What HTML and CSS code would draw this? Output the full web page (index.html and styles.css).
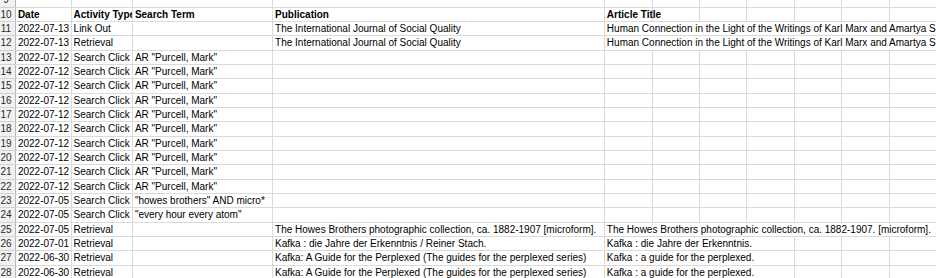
FILE: index.html
```html
<!DOCTYPE html>
<html lang="en">
<head>
<meta charset="utf-8">
<title>Activity log</title>
<link rel="stylesheet" href="styles.css">
</head>
<body>
<table class="sheet">
  <colgroup>
    <col class="c-rh">
    <col class="c-a">
    <col class="c-b">
    <col class="c-c">
    <col class="c-d">
    <col class="c-n"><col class="c-n"><col class="c-n"><col class="c-n"><col class="c-n"><col class="c-n"><col class="c-n">
  </colgroup>
  <tbody>
    <tr><th class="rh">9</th><td></td><td></td><td></td><td></td><td></td><td></td><td></td><td></td><td></td><td></td><td></td></tr>
    <tr class="head"><th class="rh">10</th><td>Date</td><td class="clip">Activity Type</td><td>Search Term</td><td>Publication</td><td>Article Title</td><td></td><td></td><td></td><td></td><td></td><td></td></tr>
    <tr><th class="rh">11</th><td>2022-07-13</td><td>Link Out</td><td></td><td>The International Journal of Social Quality</td><td colspan="7">Human Connection in the Light of the Writings of Karl Marx and Amartya Sen</td></tr>
    <tr><th class="rh">12</th><td>2022-07-13</td><td>Retrieval</td><td></td><td>The International Journal of Social Quality</td><td colspan="7">Human Connection in the Light of the Writings of Karl Marx and Amartya Sen</td></tr>
    <tr><th class="rh">13</th><td>2022-07-12</td><td>Search Click</td><td>AR "Purcell, Mark"</td><td></td><td></td><td></td><td></td><td></td><td></td><td></td><td></td></tr>
    <tr><th class="rh">14</th><td>2022-07-12</td><td>Search Click</td><td>AR "Purcell, Mark"</td><td></td><td></td><td></td><td></td><td></td><td></td><td></td><td></td></tr>
    <tr><th class="rh">15</th><td>2022-07-12</td><td>Search Click</td><td>AR "Purcell, Mark"</td><td></td><td></td><td></td><td></td><td></td><td></td><td></td><td></td></tr>
    <tr><th class="rh">16</th><td>2022-07-12</td><td>Search Click</td><td>AR "Purcell, Mark"</td><td></td><td></td><td></td><td></td><td></td><td></td><td></td><td></td></tr>
    <tr><th class="rh">17</th><td>2022-07-12</td><td>Search Click</td><td>AR "Purcell, Mark"</td><td></td><td></td><td></td><td></td><td></td><td></td><td></td><td></td></tr>
    <tr><th class="rh">18</th><td>2022-07-12</td><td>Search Click</td><td>AR "Purcell, Mark"</td><td></td><td></td><td></td><td></td><td></td><td></td><td></td><td></td></tr>
    <tr><th class="rh">19</th><td>2022-07-12</td><td>Search Click</td><td>AR "Purcell, Mark"</td><td></td><td></td><td></td><td></td><td></td><td></td><td></td><td></td></tr>
    <tr><th class="rh">20</th><td>2022-07-12</td><td>Search Click</td><td>AR "Purcell, Mark"</td><td></td><td></td><td></td><td></td><td></td><td></td><td></td><td></td></tr>
    <tr><th class="rh">21</th><td>2022-07-12</td><td>Search Click</td><td>AR "Purcell, Mark"</td><td></td><td></td><td></td><td></td><td></td><td></td><td></td><td></td></tr>
    <tr><th class="rh">22</th><td>2022-07-12</td><td>Search Click</td><td>AR "Purcell, Mark"</td><td></td><td></td><td></td><td></td><td></td><td></td><td></td><td></td></tr>
    <tr><th class="rh">23</th><td>2022-07-05</td><td>Search Click</td><td>"howes brothers" AND micro*</td><td></td><td></td><td></td><td></td><td></td><td></td><td></td><td></td></tr>
    <tr><th class="rh">24</th><td>2022-07-05</td><td>Search Click</td><td>"every hour every atom"</td><td></td><td></td><td></td><td></td><td></td><td></td><td></td><td></td></tr>
    <tr><th class="rh">25</th><td>2022-07-05</td><td>Retrieval</td><td></td><td>The Howes Brothers photographic collection, ca. 1882-1907 [microform].</td><td colspan="7">The Howes Brothers photographic collection, ca. 1882-1907. [microform].</td></tr>
    <tr><th class="rh">26</th><td>2022-07-01</td><td>Retrieval</td><td></td><td>Kafka : die Jahre der Erkenntnis / Reiner Stach.</td><td colspan="4">Kafka : die Jahre der Erkenntnis.</td><td></td><td></td><td></td></tr>
    <tr><th class="rh">27</th><td>2022-06-30</td><td>Retrieval</td><td></td><td>Kafka: A Guide for the Perplexed (The guides for the perplexed series)</td><td colspan="4">Kafka : a guide for the perplexed.</td><td></td><td></td><td></td></tr>
    <tr><th class="rh">28</th><td>2022-06-30</td><td>Retrieval</td><td></td><td>Kafka: A Guide for the Perplexed (The guides for the perplexed series)</td><td colspan="4">Kafka : a guide for the perplexed.</td><td></td><td></td><td></td></tr>
  </tbody>
</table>
</body>
</html>
```
FILE: styles.css
```css
html, body {
  margin: 0;
  padding: 0;
  background: #ffffff;
  overflow: hidden;
}

.sheet {
  margin: -7.6px 0 0 -4.3px;
  border-collapse: collapse;
  table-layout: fixed;
  width: 940.4px;
  font-family: "Liberation Sans", Arial, sans-serif;
  font-size: 10px;
  color: #000000;
}

.c-rh { width: 19.6px; }
.c-a { width: 55.7px; }
.c-b { width: 61.3px; }
.c-c { width: 140.2px; }
.c-d { width: 331.8px; }
.c-n { width: 47.4px; }

.sheet tr {
  height: 14.33px;
}

.sheet td,
.sheet th {
  border: 1px solid #dadada;
  padding: 0 0 1.3px 1.6px;
  height: 14.33px;
  box-sizing: border-box;
  line-height: 11px;
  vertical-align: bottom;
  white-space: nowrap;
  overflow: visible;
  text-align: left;
  font-weight: normal;
}

.sheet .rh {
  background: #f1f1f1;
  color: #2a2a2a;
  text-align: center;
  padding-left: 0;
  border-color: #d2d2d2;
  border-right-color: #b8b8b8;
}

.head td {
  font-weight: bold;
}

.sheet .clip {
  overflow: hidden;
  text-overflow: clip;
}
```
